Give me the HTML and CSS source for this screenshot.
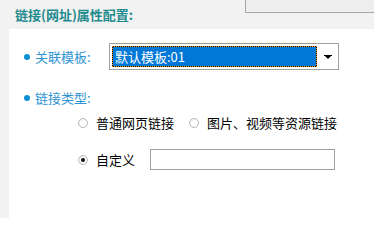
FILE: index.html
```html
<!DOCTYPE html>
<html lang="zh-CN">
<head>
<meta charset="utf-8">
<title>链接(网址)属性配置</title>
<link rel="stylesheet" href="styles.css">
</head>
<body>
<div class="page">
  <header class="head">
    <h1 class="title">链接(网址)属性配置:</h1>
    <div class="tab"></div>
  </header>
  <main class="panel">
    <div class="row row-tpl">
      <span class="dot"></span>
      <span class="lbl">关联模板:</span>
      <div class="select">
        <span class="sel-focus"><span class="sel-value">默认模板:01</span></span>
        <span class="sel-btn"><span class="arrow"></span></span>
      </div>
    </div>
    <div class="row row-type">
      <span class="dot"></span>
      <span class="lbl">链接类型:</span>
    </div>
    <div class="opts">
      <div class="opt-row">
        <span class="radio"></span><span class="opt-text">普通网页链接</span>
        <span class="radio radio-2"></span><span class="opt-text">图片、视频等资源链接</span>
      </div>
      <div class="opt-row opt-row-2">
        <span class="radio checked"></span><span class="opt-text">自定义</span>
        <span class="custom"></span>
      </div>
    </div>
  </main>
</div>
</body>
</html>
```

FILE: styles.css
```css
html, body {
  margin: 0;
  padding: 0;
  background: #ffffff;
}
body {
  width: 376px;
  height: 218px;
  overflow: hidden;
  font-family: "Noto Sans CJK SC", "Noto Sans", sans-serif;
  font-size: 13px;
}
.page {
  width: 374px;
  height: 218px;
  background: #f2f2f2;
  display: flex;
  flex-direction: column;
}
.head {
  height: 29px;
  display: flex;
  justify-content: space-between;
  align-items: flex-start;
  flex: none;
}
.title {
  margin: 0;
  padding-left: 15px;
  font-size: 13px;
  font-weight: bold;
  line-height: 30px;
  color: #1f8b8e;
}
.tab {
  width: 128px;
  height: 12px;
  background: #eeeeee;
  border-left: 1px solid #a6a6a6;
  border-bottom: 1px solid #a6a6a6;
}
.panel {
  box-sizing: border-box;
  height: 189px;
  flex: none;
  margin-left: 9px;
  background: #ffffff;
  padding-top: 14px;
  display: flex;
  flex-direction: column;
}
.row {
  display: flex;
  align-items: center;
  padding-left: 15px;
}
.row-tpl {
  height: 27px;
}
.row-type {
  height: 17px;
  margin-top: 19px;
}
.dot {
  width: 6px;
  height: 6px;
  border-radius: 50%;
  background: #0b8fd3;
  margin-right: 5px;
  flex: none;
}
.lbl {
  width: 74px;
  color: #2f94d2;
  line-height: 17px;
}
.select {
  width: 226px;
  height: 25px;
  border: 1px solid #a0a0a0;
  display: flex;
  align-items: center;
  padding-left: 2px;
}
.sel-focus {
  width: 205px;
  height: 21px;
  background: #000000;
  display: block;
}
.sel-value {
  display: flex;
  align-items: center;
  box-sizing: border-box;
  width: 205px;
  height: 21px;
  border: 1px dotted #ff9a1a;
  background: #0078d7;
  background-clip: padding-box;
  color: #ffffff;
  padding-left: 2px;
  font-size: 13px;
}
.sel-btn {
  flex: 1;
  display: flex;
  justify-content: center;
  align-items: center;
  height: 100%;
}
.arrow {
  width: 0;
  height: 0;
  border-left: 3px solid transparent;
  border-right: 3px solid transparent;
  border-top: 3px solid #000000;
  position: relative;
  top: 1px;
}
.arrow::before {
  content: "";
  position: absolute;
  left: -4px;
  top: -4px;
  width: 8px;
  height: 1px;
  background: #000000;
}
.opts {
  padding-left: 69px;
  margin-top: 7px;
  display: flex;
  flex-direction: column;
}
.opt-row {
  height: 20px;
  display: flex;
  align-items: center;
  color: #000000;
}
.opt-row-2 {
  height: 21px;
  margin-top: 16px;
}
.radio {
  box-sizing: border-box;
  width: 10px;
  height: 10px;
  border-radius: 50%;
  border: 1px solid #b8b8b8;
  background: radial-gradient(circle at 60% 60%, #ffffff 40%, #e8e8e8 100%);
  margin-right: 8px;
  flex: none;
  display: flex;
  align-items: center;
  justify-content: center;
}
.radio-2 {
  margin-left: 15px;
}
.checked::after {
  content: "";
  width: 4px;
  height: 4px;
  border-radius: 50%;
  background: #111111;
}
.opt-text {
  line-height: 20px;
}
.custom {
  box-sizing: border-box;
  width: 185px;
  height: 21px;
  border: 1px solid #a0a0a0;
  margin-left: 15px;
  background: #ffffff;
}
```
